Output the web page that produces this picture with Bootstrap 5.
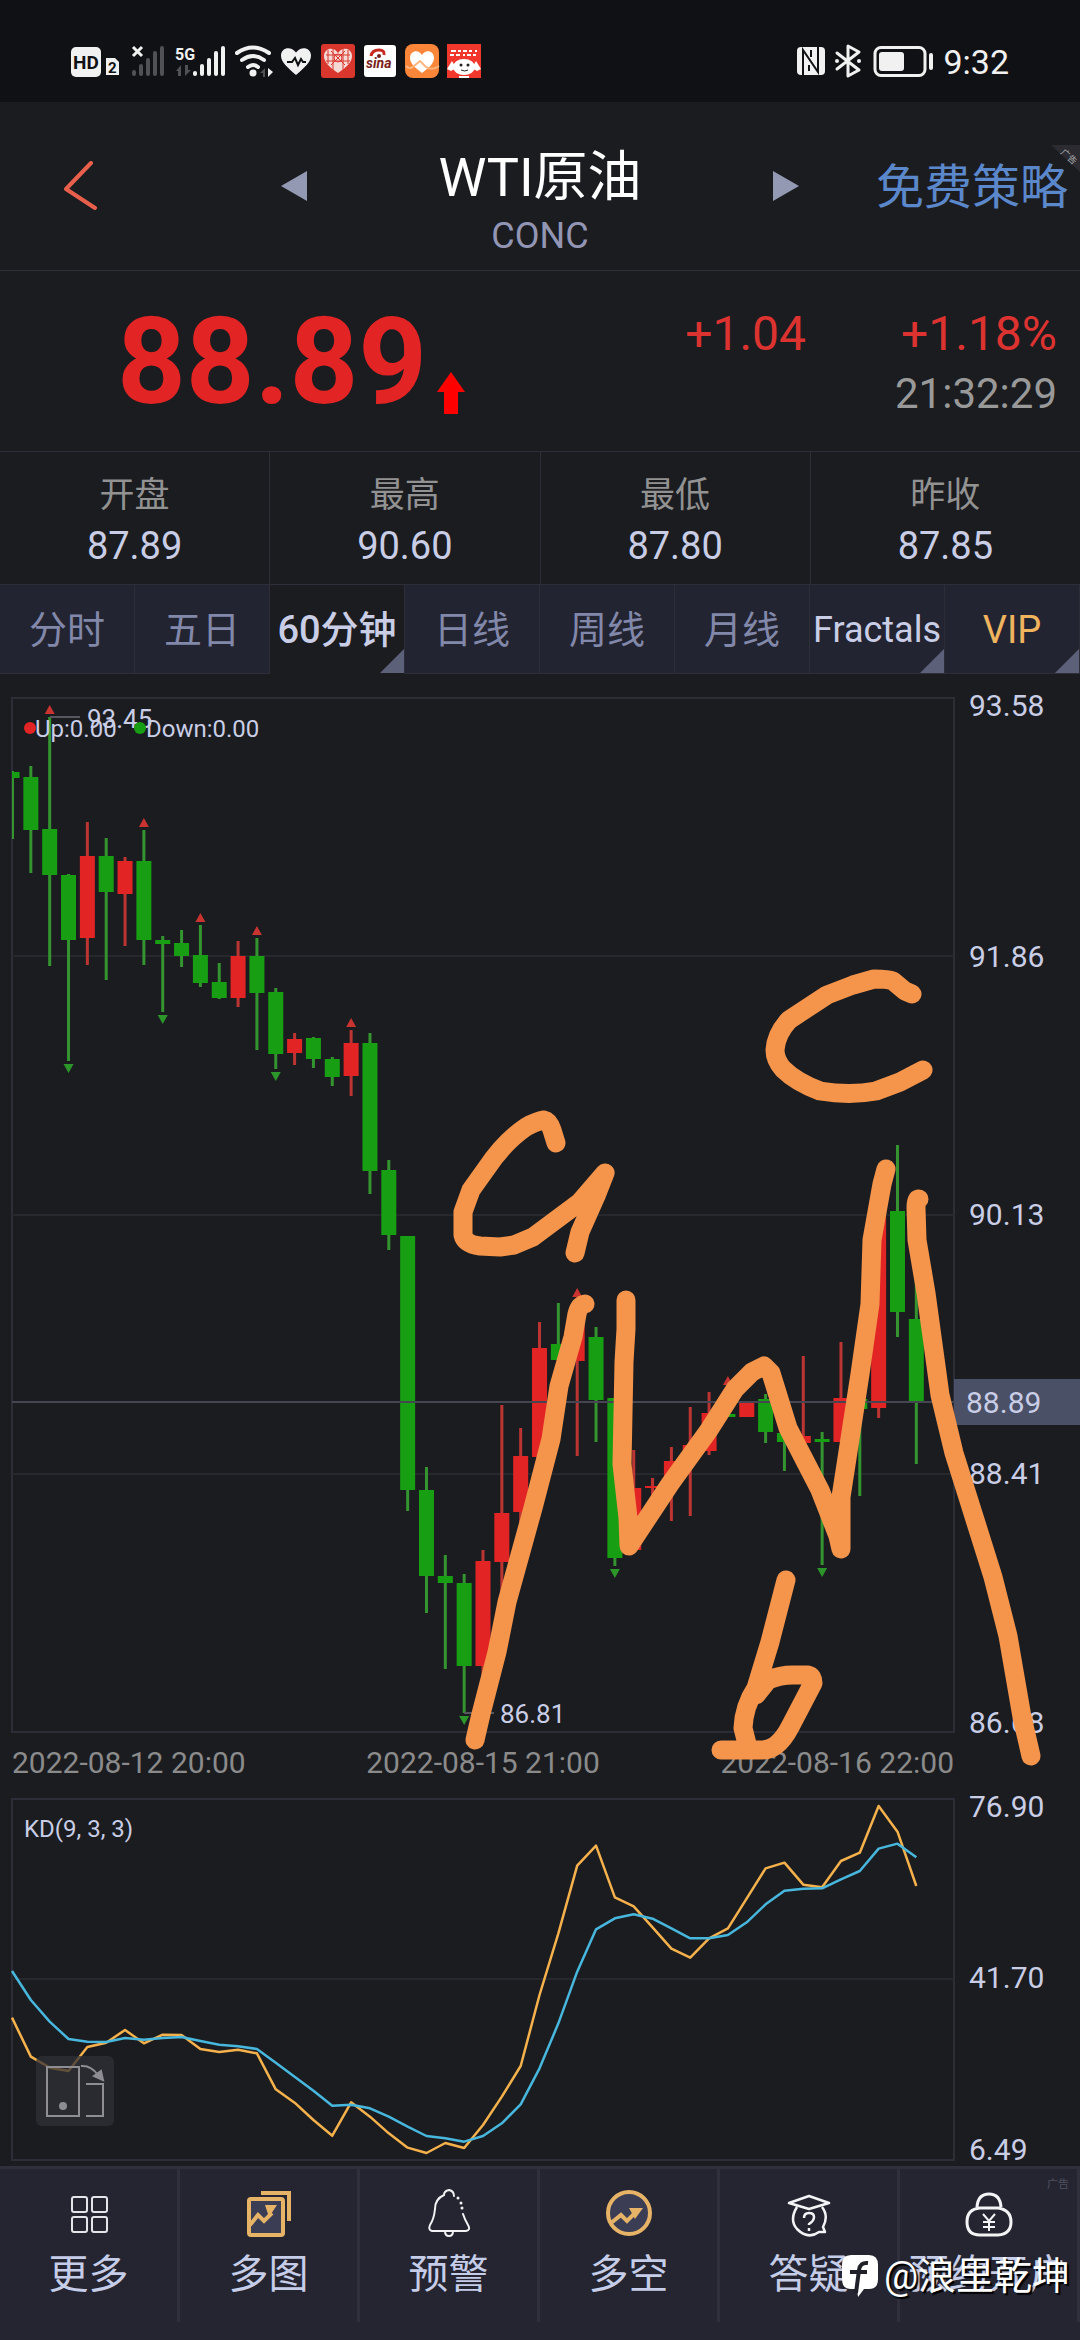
<!DOCTYPE html>
<html lang="zh-CN">
<head>
<meta charset="utf-8">
<meta name="viewport" content="width=device-width, initial-scale=1">
<title>WTI原油 CONC</title>
<link href="https://cdn.jsdelivr.net/npm/bootstrap@5.3.0/dist/css/bootstrap.min.css" rel="stylesheet">
<style>
  :root { --ink:#c9cee6; --muted:#9296b4; --panel:#1b1c20; --tile:#232431; --rule:#2d2e37; --up:#e32424; --down:#179e13; }
  body { background:var(--panel); color:var(--ink); font-family:Roboto,"Noto Sans CJK SC",sans-serif; }
  button, a { font:inherit; }
  .plain { background:none; border:0; padding:0; line-height:1; }
  .statusbar { height:102px; background:#101115; padding:40px 71px 0; }
  .clock { font-size:34px; line-height:44px; color:#f1f1f1; }
  .titlebar { display:grid; grid-template-columns:1fr 518px 1fr; height:169px; border-bottom:1px solid var(--rule); }
  .back { padding-left:64px; }
  .title-stack { padding-top:32px; }
  .titlebar h1 { font-size:54px; line-height:64px; font-weight:400; color:#fff; }
  .code { font-size:36px; line-height:44px; color:var(--muted); margin-top:4px; }
  .strategy { font-size:48px; line-height:56px; padding-top:4px; color:#5b87cb; text-decoration:none; white-space:nowrap; }
  .adcorner { top:43px; right:0; }
  .quote { height:181px; border-bottom:1px solid var(--rule); padding:2px 23px 0 117px; }
  .last { font-size:120px; line-height:120px; font-weight:700; color:var(--up); }
  .rise { margin:0 0 8px 10px; }
  .change { font-size:48px; line-height:56px; color:#dd3330; gap:95px; }
  .clocked { font-size:42px; line-height:48px; color:#999; margin-top:8px; }
  .stats { height:132px; }
  .stats > div { padding-top:22px; }
  .stats > div + div { border-left:1px solid var(--rule); }
  .stats dt { font-size:35px; line-height:44px; font-weight:400; color:#929292; }
  .stats dd { font-size:38px; line-height:44px; margin:6px 0 0; }
  .periods { height:90px; border-top:1px solid var(--rule); }
  .periods button { flex:1 1 0; min-width:0; background:var(--tile); color:#8288aa; font-size:38px; padding-top:2px; border-right:1px solid var(--rule); border-bottom:1px solid var(--rule); white-space:nowrap; }
  .periods .current { background:var(--panel); color:var(--ink); font-weight:500; border-bottom-color:var(--panel); }
  .periods .latin { font-size:36px; color:var(--ink); }
  .periods .vip { color:#f0b45f; }
  .more::after { content:""; position:absolute; right:0; bottom:0; border-style:solid; border-width:0 0 24px 24px; border-color:transparent transparent #5c6179; }
  .periods .more { display:flex; align-items:center; justify-content:center; }
  .charts svg { display:block; }
  .charts text { font-family:Roboto,sans-serif; fill:var(--ink); }
  .axis { font-size:30px; }
  .tag { font-size:26px; }
  .legend24 { font-size:24px; }
  .dates { height:44px; font-size:30px; line-height:46px; color:#8b8b8b; padding:0 126px 0 12px; }
  .ink-layer { inset:0; pointer-events:none; }
  .rotate { left:36px; bottom:40px; width:78px; height:70px; border-radius:6px; background:rgba(48,48,54,.75); }
  .toolbar { background:#242531; border-top:3px solid #2f303b; padding-bottom:18px; }
  .toolbar a { flex:1 1 0; min-width:0; height:153px; padding-top:20px; border-right:3px solid #2f303b; color:#c6cde8; font-size:40px; line-height:48px; text-decoration:none; white-space:nowrap; }
  .toolbar svg.ico { display:block; width:48px; height:48px; margin:0 auto 14px; }
  .adnote { top:8px; right:8px; font-size:11px; line-height:16px; color:#50515e; }
  .watermark { right:10px; bottom:40px; font-size:38px; line-height:48px; color:#fff; gap:5px; text-shadow:2px 2px 1px #000; }
</style>
<script src="https://cdn.jsdelivr.net/npm/bootstrap@5.3.0/dist/js/bootstrap.bundle.min.js"></script>
</head>
<body>
<main class="d-flex flex-column min-vh-100 overflow-hidden">

  <div class="statusbar d-flex justify-content-between">
    <svg width="411" height="44" viewBox="71 40 411 44" fill="#f1f1f1" font-family="Roboto, sans-serif" font-weight="700">
      <rect x="71" y="47" width="30" height="30" rx="5"/>
      <text x="73" y="69" font-size="19" fill="#101115">HD</text>
      <path d="M106 58h9l4 4v13h-13z"/>
      <text x="108" y="73" font-size="15" fill="#101115">2</text>
      <path d="M133 47l9 9m0-9l-9 9" stroke="#f1f1f1" stroke-width="3"/>
      <g fill="#505155"><rect x="132" y="70" width="4" height="6" rx="2"/><rect x="139" y="64" width="4" height="12" rx="2"/><rect x="146" y="58" width="4" height="18" rx="2"/><rect x="153" y="51" width="4" height="25" rx="2"/><rect x="160" y="46" width="4" height="30" rx="2"/>
      <path d="M176 71l5-6v11h-3v-5zM185 65v11l6-6h-3v-5z"/><path d="M260 73l5-5v9h-2v-4z"/></g>
      <text x="175" y="60" font-size="16">5G</text>
      <rect x="193" y="71" width="4" height="5" rx="2"/><rect x="200" y="64" width="4" height="12" rx="2"/><rect x="207" y="58" width="4" height="18" rx="2"/><rect x="214" y="51" width="4" height="25" rx="2"/><rect x="221" y="46" width="4" height="30" rx="2"/>
      <g fill="none" stroke="#f1f1f1" stroke-width="4" stroke-linecap="round"><path d="M237 53q16-11 32 0M242 60q11-8 22 0M248 67q5-4 10 0"/></g>
      <circle cx="253" cy="73" r="3.500"/><path d="M268 68v9l5-5z"/>
      <path d="M296 75C287 67 281 62 281 55.500c0-8 10-10 15-3 5-7 15-5 15 3C311 62 305 67 296 75z"/>
      <path d="M287 62h5l3-4 3 7 3-6 2 3h3" fill="none" stroke="#101115" stroke-width="2"/>
      <rect x="321" y="44" width="34" height="34" rx="3" fill="#d9362d"/>
      <path d="M338 73C329 67 324 62 324 56c0-8 10-10 14-3 4-7 14-5 14 3 0 6-5 11-14 17z" fill="#f6d9d4"/>
      <g stroke="#d9362d" fill="none"><path d="M328 50v14M333 48v22M343 48v22M348 50v14M326 55h24M326 61h24M331 51l14 14M345 51L331 65"/><circle cx="338" cy="58" r="4"/></g>
      <rect x="364" y="45" width="32" height="32" rx="3" fill="#fff"/>
      <text x="366" y="68" font-size="14" font-style="italic" fill="#7c1f1c">sina</text>
      <path d="M371 56q1-6 8-6 6 0 5 5" fill="none" stroke="#c8281e" stroke-width="3"/><circle cx="379" cy="56" r="2" fill="#7c1f1c"/>
      <rect x="405" y="44" width="34" height="34" rx="8" fill="#fb8538"/>
      <path d="M422 73C414 67 410 63 410 58c0-8 9-9 12-3 3-6 12-5 12 3 0 5-4 9-12 15z" fill="#fff"/>
      <path d="M406 66q4 4 8 0l6-5 6 6q6 4 13-1" fill="none" stroke="#fdb57d" stroke-width="2"/>
      <rect x="447" y="44" width="34" height="34" fill="#f2372c"/>
      <path d="M451 51h5m2 0h3m2 0h4m2 0h3m3 0h2M450 55h4m2 0h4m3 0h2m2 0h4m2 0h3" stroke="#fff" stroke-width="2"/>
      <ellipse cx="464" cy="67" rx="11" ry="8" fill="#fff"/><path d="M447 69l5-8 4 7-5 3zM481 69l-5-8-4 7 5 3zM459 76h10v2h-10z" fill="#fff"/>
      <circle cx="461" cy="65" r="1.500" fill="#222"/><circle cx="468" cy="65" r="1.500" fill="#222"/><path d="M461 70q4 2 7 0" stroke="#222" fill="none"/>
    </svg>
    <div class="d-flex gap-2">
      <svg width="140" height="44" viewBox="796 40 140 44" fill="#f1f1f1">
        <rect x="798" y="47" width="28" height="28" rx="4"/>
        <path d="M804 75V50l15 22V54M810 65v6m2-21v7M819 47v25M804 50v25" fill="none" stroke="#101115" stroke-width="2"/>
        <path d="M838 53l22 17-11 6V46l11 6-22 17" fill="none" stroke="#f1f1f1" stroke-width="3" stroke-linejoin="round" stroke-linecap="round"/><circle cx="838" cy="61" r="2"/><circle cx="860" cy="61" r="2"/>
        <rect x="876" y="47.500" width="50" height="28" rx="6" fill="none" stroke="#f1f1f1" stroke-width="3"/>
        <rect x="880" y="52" width="25" height="19" rx="3"/><rect x="930" y="53" width="4" height="17" rx="2"/>
      </svg>
      <span class="clock">9:32</span>
    </div>
  </div>

  <header class="titlebar position-relative">
    <button class="plain back text-start" type="button" aria-label="返回">
      <svg width="34" height="50" viewBox="0 0 34 50" fill="none" stroke="#e8604c" stroke-width="4" stroke-linecap="round" stroke-linejoin="round"><path d="M27 2L2 28l29 19"/></svg>
    </button>
    <div class="d-flex align-items-center justify-content-between">
      <button class="plain" type="button" aria-label="上一个"><svg width="26" height="30" viewBox="0 0 26 30" fill="#9398b3"><path d="M0 15L26 0v30z"/></svg></button>
      <div class="title-stack text-center">
        <h1 class="mb-0">WTI原油</h1>
        <div class="code">CONC</div>
      </div>
      <button class="plain" type="button" aria-label="下一个"><svg width="26" height="30" viewBox="0 0 26 30" fill="#9398b3"><path d="M26 15L0 0v30z"/></svg></button>
    </div>
    <div class="d-flex align-items-center justify-content-end pe-2"><a class="strategy me-1" href="#">免费策略</a></div>
    <svg class="adcorner position-absolute" width="29" height="27" viewBox="0 0 29 27"><path d="M0 0h29v27z" fill="#2b2b31"/><text transform="translate(9 8) rotate(42)" font-size="9" fill="#a8a8ac" font-family="Noto Sans CJK SC, sans-serif">广告</text></svg>
  </header>

  <section class="quote d-flex justify-content-between align-items-center">
    <div class="d-flex align-items-end">
      <span class="last">88.89</span>
      <svg class="rise" width="28" height="42" viewBox="0 0 28 42" fill="#f00" role="img" aria-label="上涨"><path d="M14 0l14 20h-7v22H7V20H0z"/></svg>
    </div>
    <div class="text-end">
      <div class="change d-flex justify-content-end"><span>+1.04</span><span>+1.18%</span></div>
      <div class="clocked">21:32:29</div>
    </div>
  </section>

  <dl class="stats row g-0 mb-0 text-center">
    <div class="col"><dt>开盘</dt><dd>87.89</dd></div>
    <div class="col"><dt>最高</dt><dd>90.60</dd></div>
    <div class="col"><dt>最低</dt><dd>87.80</dd></div>
    <div class="col"><dt>昨收</dt><dd>87.85</dd></div>
  </dl>

  <nav class="periods d-flex" aria-label="周期">
    <button class="plain" type="button">分时</button>
    <button class="plain" type="button">五日</button>
    <button class="plain current more position-relative" type="button">60分钟</button>
    <button class="plain" type="button">日线</button>
    <button class="plain" type="button">周线</button>
    <button class="plain" type="button">月线</button>
    <button class="plain latin more position-relative" type="button">Fractals</button>
    <button class="plain vip more position-relative" type="button">VIP</button>
  </nav>

  <section class="charts position-relative">
    <svg class="w-100" viewBox="0 674 1080 1066">
      <g fill="none" stroke="#2c2d37" stroke-width="2">
        <rect x="12" y="698" width="942" height="1034"/>
        <path d="M12 956H954M12 1215H954M12 1474H954" stroke="#27282d"/>
      </g>
      <g id="candles"></g>
      <path d="M12 1402H954" stroke="#454652" stroke-width="2"/>
      <path d="M50 717H80M464 1713H494" stroke="#55565e" stroke-width="2"/>
      <g class="tag"><text x="87" y="728">93.45</text><text x="500" y="1723">86.81</text></g>
      <circle cx="30" cy="728" r="6" fill="#e32424"/><circle cx="140" cy="728" r="6" fill="#179e13"/>
      <g class="legend24"><text x="35" y="737">Up:0.00</text><text x="146" y="737">Down:0.00</text></g>
      <g class="axis">
        <text x="969" y="716">93.58</text><text x="969" y="967">91.86</text><text x="969" y="1225">90.13</text>
        <text x="969" y="1484">88.41</text><text x="969" y="1733">86.68</text>
        <rect x="954" y="1379" width="126" height="46" fill="#4a5066"/><text x="966" y="1413">88.89</text>
      </g>
    </svg>
    <div class="dates d-flex justify-content-between"><span>2022-08-12 20:00</span><span>2022-08-15 21:00</span><span>2022-08-16 22:00</span></div>
    <svg class="w-100" viewBox="0 1784 1080 382">
      <g fill="none" stroke="#2c2d37" stroke-width="2">
        <rect x="12" y="1799" width="942" height="361"/><path d="M12 1979H954" stroke="#27282d"/>
      </g>
      <g id="kd" fill="none" stroke-width="2.500" stroke-linejoin="round"></g>
      <text class="legend24" x="24" y="1837">KD(9, 3, 3)</text>
      <g class="axis"><text x="969" y="1817">76.90</text><text x="969" y="1988">41.70</text><text x="969" y="2160">6.49</text></g>
    </svg>
    <button class="plain rotate position-absolute" type="button" aria-label="横屏">
      <svg width="78" height="70" viewBox="0 0 78 70" fill="none" stroke="#8d8d92" stroke-width="2"><rect x="11" y="11" width="32" height="49"/><circle cx="27" cy="50" r="3" fill="#8d8d92"/><path d="M50 28h17v32H50M45 10q10-1 17 9"/><path d="M67 24l-9-4 7-5z" fill="#8d8d92"/></svg>
    </button>
    <svg class="ink-layer position-absolute w-100 h-100" viewBox="0 674 1080 1492" preserveAspectRatio="none" fill="none" stroke="#f5944b" stroke-width="19" stroke-linecap="round" stroke-linejoin="round">
      <path d="M556 1143L552 1130Q549 1121 544 1120Q537 1121 526 1127Q504 1142 486 1169L471 1190L463 1212V1235Q465 1244 480 1246L500 1247L514 1245L533 1237L580 1202L605 1173L596 1196L580 1232L575 1253"/>
      <path d="M585 1304Q579 1305 577 1314L573 1337L559 1386L551 1439L533 1508L507 1602L497 1652L481 1714L475 1740"/>
      <path d="M626 1300V1329L624 1362L622 1464L628 1518L629 1546L670 1484L709 1430L735 1389L752 1372L764 1366L771 1373L788 1428L820 1490L838 1536L841 1549V1497L860 1374L870 1304L872 1240L882 1184L886 1169"/>
      <path d="M919 1199Q916 1199 916 1208L917 1240L926 1293L940 1395L954 1453L993 1577L1008 1636L1022 1717L1031 1756"/>
      <path d="M912 994L905 991L893 981Q888 979 874 979L853 985L827 995L789 1020Q776 1034 775 1050Q775 1060 783 1069Q796 1082 820 1091Q850 1096 876 1091L900 1082L923 1070"/>
      <path d="M786 1580L770 1642L756 1688Q744 1706 743 1728L747 1744M756 1695L768 1680Q780 1675 793 1675H808Q813 1676 813 1683L790 1727Q778 1750 762 1750H721"/>
    </svg>
  </section>

  <nav class="toolbar d-flex flex-grow-1 text-center position-relative" aria-label="工具">
    <a href="#"><svg class="ico" viewBox="0 0 48 48" fill="none" stroke="#e4e4ea" stroke-width="2"><rect x="7" y="8" width="15" height="15" rx="2"/><rect x="27" y="8" width="15" height="15" rx="2"/><rect x="7" y="28" width="15" height="15" rx="2"/><rect x="27" y="28" width="15" height="15" rx="2"/></svg>更多</a>
    <a href="#"><svg class="ico" viewBox="0 0 48 48" fill="none" stroke="#e7b467" stroke-width="4"><rect x="4" y="10" width="34" height="36" rx="2" fill="#3b3d55"/><path d="M16 4h28v28M5 36l8-10 6 6 8-8"/><path d="M20 16h12L24 28z" fill="#e7b467" stroke="none"/></svg>多图</a>
    <a href="#"><svg class="ico" viewBox="0 0 48 48" fill="none" stroke="#f2f2f5" stroke-width="2" stroke-linecap="round"><path d="M29 7Q29 2 24 1q-5 1-5 5-9 4-9 14-1 10-5 16-2 5 2 6h34q5-1 2-6-3-5-5-11"/><path d="M33 9h0M36 14h0M37 19h0" stroke-width="3"/><path d="M20 42q0 5 4 5t4-5"/></svg>预警</a>
    <a href="#"><svg class="ico" viewBox="0 0 48 48" fill="none" stroke="#e7b467" stroke-width="4"><circle cx="24" cy="24" r="21" fill="#3b3d55"/><path d="M6 34l10-8 6 6 10-10"/><path d="M24 19h14l-8 11z" fill="#e7b467" stroke="none"/></svg>多空</a>
    <a href="#"><svg class="ico" viewBox="0 0 48 48" fill="none" stroke="#f4f4f6" stroke-width="2.500" stroke-linejoin="round"><path d="M4 14L24 7l20 7-20 6zM12 18Q4 31 12 40q11 11 22 3h6l-2-5q6-11-1-20"/><path d="M19 29q0-5 5-5t5 4-5 7v1M24 39v3"/></svg>答疑</a>
    <a class="position-relative" href="#"><svg class="ico" viewBox="0 0 48 48" fill="none" stroke="#f4f4f6" stroke-width="3"><path d="M12 18Q13 5 24 5t12 13M15 19h18q13 2 13 14T33 46H15Q2 46 2 33T15 19z"/><path d="M18 25l6 7 6-7M24 32v10M18 33h12M18 38h12" stroke-width="2"/></svg>预约开户<span class="adnote position-absolute">广告</span></a>
    <div class="watermark position-absolute d-flex align-items-center">
      <svg width="38" height="44" viewBox="0 0 38 44"><path d="M10 1h18q9 0 9 10v14q0 10-9 10h-5l-6 8-1-8h-6Q1 35 1 25V11Q1 1 10 1z" fill="#fff"/><path d="M27 9q-8-1-9 7l-3 23M9 18h17" fill="none" stroke="#202128" stroke-width="4"/></svg>
      <span>@浪里乾坤</span>
    </div>
  </nav>
</main>

<script>
  // One slot is a fiftieth of the plot width.
  const slotX = i => 12 + i * 18.84;
  // direction, high, body top, body bottom, low, fractal mark
  const candles = [
    ['d',771,772,778,839],['d',766,777,830,873],['d',717,829,875,966,'u'],['d',874,875,940,1061,'v'],
    ['u',822,856,938,965],['d',838,856,892,980],['u',857,861,894,946],['d',830,861,940,965,'u'],
    ['d',936,940,944,1012,'v'],['d',930,943,956,967],['d',925,955,983,987,'u'],['d',963,982,998,999],
    ['u',941,956,998,1007],['d',938,956,993,1050,'u'],['d',988,992,1054,1069,'v'],['u',1033,1039,1053,1065],
    ['d',1037,1038,1059,1068],['d',1057,1059,1077,1086],['u',1030,1043,1076,1096,'u'],['d',1033,1043,1171,1194],
    ['d',1160,1170,1235,1250],['d',1236,1236,1490,1511],['d',1467,1490,1576,1613],['d',1555,1576,1583,1669],
    ['d',1574,1583,1666,1713,'v'],['u',1550,1561,1666,1690],['u',1405,1513,1562,1595],['u',1428,1456,1512,1530],
    ['u',1322,1348,1457,1460],['d',1303,1344,1360,1365],['u',1300,1325,1361,1456,'u'],['d',1327,1337,1400,1442],
    ['d',1398,1398,1558,1566,'v'],['u',1450,1488,1550,1550],['u',1478,1486,1488,1500],['u',1447,1461,1484,1521],
    ['u',1407,1445,1452,1516],['u',1392,1413,1451,1455],['d',1388,1414,1417,1417,'u'],['u',1401,1401,1417,1417],
    ['d',1394,1399,1432,1443],['d',1433,1433,1442,1471],['u',1356,1436,1443,1443],['d',1432,1439,1442,1565,'v'],
    ['u',1342,1398,1442,1442],['d',1390,1399,1409,1496],['u',1200,1210,1408,1418],['d',1145,1211,1312,1337],
    ['d',1275,1319,1401,1464]
  ];
  document.getElementById('candles').innerHTML = candles.map(([dir, hi, top, bot, lo, mark], i) => {
    const x = slotX(i), body = dir === 'u' ? '#e32424' : '#179e13', wick = dir === 'u' ? '#bd3532' : '#34942f';
    const left = Math.max(12, x - 7.5);
    let s = `<rect x="${Math.max(12, x - 1.5)}" y="${hi}" width="${i ? 3 : 2}" height="${lo - hi}" fill="${wick}"/>` +
            `<rect x="${left}" y="${top}" width="${x + 7.5 - left}" height="${bot - top}" fill="${body}"/>`;
    if (mark === 'u') s += `<path d="M${x - 5} ${hi - 3}h10l-5-9z" fill="#c93330"/>`;
    if (mark === 'v') s += `<path d="M${x - 5} ${lo + 3}h10l-5 9z" fill="#2c962a"/>`;
    return s;
  }).join('');

  // Thirds of a unit below y=1720
  const k = [893,1010,1043,1053,981,968,930,970,944,945,987,996,989,1000,1108,1148,1200,1247,1147,1190,1240,1283,1299,1269,1284,1215,1130,1038,825,640,437,377,532,559,622,686,713,655,625,535,445,428,494,502,423,398,258,335,498];
  const d = [753,840,905,957,965,966,954,959,954,951,963,974,979,987,1028,1070,1112,1157,1154,1165,1190,1220,1248,1255,1265,1248,1210,1153,1045,910,755,628,595,583,596,625,655,655,645,607,553,512,506,505,478,453,386,371,412];
  const line = (v, color) => `<polyline stroke="${color}" points="${v.map((y, i) => slotX(i) + ',' + (1720 + y / 3)).join(' ')}"/>`;
  document.getElementById('kd').innerHTML = line(k, '#f5b14c') + line(d, '#48b7dd');
</script>
</body>
</html>
